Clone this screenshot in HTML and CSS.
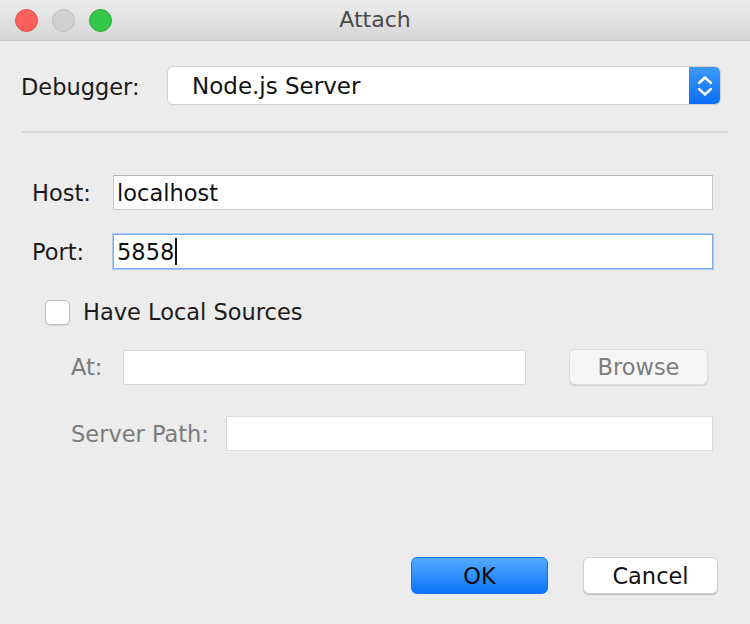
FILE: index.html
```html
<!DOCTYPE html>
<html lang="en">
<head>
    <meta charset="UTF-8">
    <title>Attach</title>
    <link rel="stylesheet" href="styles.css">
</head>
<body>
    <div class="window">
        <!-- title bar -->
        <div class="titlebar">
            <div class="lights">
                <span class="light red"></span>
                <span class="light gray"></span>
                <span class="light green"></span>
            </div>
            <div class="title">Attach</div>
        </div>

        <div class="content">
            <!-- debugger choice -->
            <div class="debugRow">
                <span class="label debugLabel">Debugger:</span>
                <div class="select">
                    <span class="selectText">Node.js Server</span>
                    <span class="stepper">
                        <svg width="18" height="24" viewBox="0 0 18 24">
                            <path d="M3 9 L9 3.5 L15 9" fill="none" stroke="#fff" stroke-width="2.4" stroke-linecap="round" stroke-linejoin="round"/>
                            <path d="M3 15 L9 20.5 L15 15" fill="none" stroke="#fff" stroke-width="2.4" stroke-linecap="round" stroke-linejoin="round"/>
                        </svg>
                    </span>
                </div>
            </div>

            <div class="separator"></div>

            <!-- connection -->
            <div class="fieldRow hostRow">
                <span class="label">Host:</span>
                <div class="field">localhost</div>
            </div>
            <div class="fieldRow portRow">
                <span class="label">Port:</span>
                <div class="field focused">5858<span class="caret"></span></div>
            </div>

            <div class="checkRow">
                <span class="checkbox"></span>
                <span class="label">Have Local Sources</span>
            </div>

            <!-- local sources, disabled -->
            <div class="fieldRow atRow">
                <span class="label disabled">At:</span>
                <div class="field atField"></div>
                <div class="button browse">Browse</div>
            </div>
            <div class="fieldRow pathRow">
                <span class="label disabled">Server Path:</span>
                <div class="field"></div>
            </div>

            <div class="actions">
                <div class="button ok">OK</div>
                <div class="button cancel">Cancel</div>
            </div>
        </div>
    </div>
</body>
</html>
```

FILE: styles.css
```css
/* dialog styles */
body {
    margin: 0;
    background-color: #ececec;
    font-family: 'DejaVu Sans', 'Liberation Sans', sans-serif;
}

.window {
    width: 750px;
    height: 624px;
    overflow: hidden;
}

.titlebar {
    height: 40px;
    background: linear-gradient(#ececec, #d6d6d6);
    border-bottom: 1px solid #c3c3c3;
    display: flex;
    align-items: center;
    position: relative;
}

.lights {
    display: flex;
    gap: 14px;
    padding-left: 15px;
}

.light {
    width: 23px;
    height: 23px;
    border-radius: 50%;
    box-sizing: border-box;
}

.red {
    background-color: #fc605c;
    border: 1px solid #e3504b;
}

.gray {
    background-color: #d0d0d0;
    border: 1px solid #c0c0c0;
}

.green {
    background-color: #34c84a;
    border: 1px solid #2cab3c;
}

.title {
    position: absolute;
    left: 0;
    right: 0;
    top: 7px;
    text-align: center;
    font-size: 22px;
    color: #4a4a4a;
}

.content {
    padding: 26px 0 0 21px;
}

.label {
    font-size: 22.5px;
    color: #1a1a1a;
    white-space: nowrap;
    flex: none;
}

.label.disabled {
    color: #7b7b7b;
}

.debugRow {
    display: flex;
    align-items: center;
    height: 37px;
    width: 699px;
}

.debugLabel {
    width: 147px;
    padding-top: 2px;
}

.select {
    flex: 1;
    height: 37px;
    background-color: #fff;
    border-radius: 5px;
    box-shadow: 0 0 0 1px #d4d4d4, 0 1px 1px #bcbcbc;
    display: flex;
    align-items: center;
    overflow: hidden;
}

.selectText {
    flex: 1;
    padding-left: 24px;
    font-size: 23px;
    color: #111;
}

.stepper {
    width: 31px;
    height: 37px;
    background: linear-gradient(#3e9bfd, #0a6cf6);
    display: flex;
    align-items: center;
    justify-content: center;
}

.separator {
    height: 2px;
    background-color: #d9d9d9;
    width: 707px;
    margin-top: 27px;
}

.fieldRow {
    display: flex;
    align-items: center;
}

.field {
    height: 33px;
    background-color: #fff;
    border: 1px solid #c9c9c9;
    border-top-color: #b4b4b4;
    display: flex;
    align-items: center;
    padding-left: 3px;
    font-size: 22.5px;
    color: #111;
    flex: 1;
}

.hostRow,
.portRow {
    width: 681px;
    margin-left: 11px;
}

.hostRow .label,
.portRow .label {
    width: 81px;
}

.hostRow {
    margin-top: 42px;
}

.portRow {
    margin-top: 24px;
}

.field.focused {
    border: 1px solid #7eaef0;
    box-shadow: 0 0 0 1px #a9c9f4;
}

.caret {
    display: inline-block;
    width: 2px;
    height: 27px;
    background-color: #111;
    margin-left: 1px;
}

.checkRow {
    display: flex;
    align-items: center;
    margin: 30px 0 0 24px;
}

.checkbox {
    width: 25px;
    height: 25px;
    box-sizing: border-box;
    background-color: #fff;
    border: 1px solid #c2c2c2;
    border-radius: 5px;
    box-shadow: 0 1px 1px #d0d0d0;
    margin-right: 13px;
}

.atRow {
    margin: 24px 0 0 50px;
}

.atRow .label {
    width: 52px;
}

.atRow .field {
    flex: none;
    width: 398px;
    border-color: #dadada;
}

.button {
    height: 36px;
    border-radius: 6px;
    display: flex;
    align-items: center;
    justify-content: center;
    font-size: 22.5px;
    box-sizing: border-box;
}

.browse {
    width: 139px;
    margin-left: 43px;
    background-color: #f6f6f6;
    border: 1px solid #dcdcdc;
    box-shadow: 0 1px 1px #d0d0d0;
    color: #7d7d7d;
}

.pathRow {
    margin: 31px 0 0 50px;
    width: 642px;
}

.pathRow .label {
    width: 155px;
}

.pathRow .field {
    border-color: #dadada;
}

.actions {
    display: flex;
    justify-content: flex-end;
    gap: 35px;
    margin: 106px 32px 0 0;
}

.ok {
    width: 137px;
    height: 37px;
    background: linear-gradient(#53a9ff, #0b75f7);
    border: 1px solid #1673e6;
    color: #0b0b0b;
}

.cancel {
    width: 135px;
    height: 37px;
    background-color: #fff;
    border: 1px solid #d0d0d0;
    box-shadow: 0 1px 1px #b8b8b8;
    color: #111;
}
```
